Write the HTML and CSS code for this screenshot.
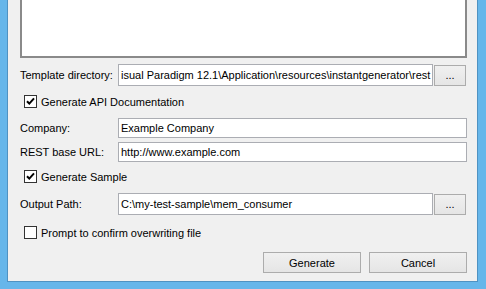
FILE: index.html
```html
<!DOCTYPE html>
<html>
<head>
<meta charset="utf-8">
<link rel="stylesheet" href="styles.css">
</head>
<body>
<div class="dialog">
  <div class="textarea"></div>

  <div class="row row-template">
    <div class="label">Template directory:</div>
    <div class="field field-short">isual Paradigm 12.1\Application\resources\instantgenerator\rest</div>
    <div class="browse">...</div>
  </div>

  <div class="check-row row-api">
    <span class="box"><svg width="11" height="11" viewBox="0 0 11 11"><path d="M2 5.2 L4.3 7.6 L9 2.4" fill="none" stroke="#000" stroke-width="2"/></svg></span>
    <span class="check-label">Generate API Documentation</span>
  </div>

  <div class="row row-company">
    <div class="label">Company:</div>
    <div class="field field-wide">Example Company</div>
  </div>

  <div class="row row-rest">
    <div class="label">REST base URL:</div>
    <div class="field field-wide">http://www.example.com</div>
  </div>

  <div class="check-row row-sample">
    <span class="box"><svg width="11" height="11" viewBox="0 0 11 11"><path d="M2 5.2 L4.3 7.6 L9 2.4" fill="none" stroke="#000" stroke-width="2"/></svg></span>
    <span class="check-label">Generate Sample</span>
  </div>

  <div class="row row-output">
    <div class="label">Output Path:</div>
    <div class="field field-short">C:\my-test-sample\mem_consumer</div>
    <div class="browse">...</div>
  </div>

  <div class="check-row row-prompt">
    <span class="box"></span>
    <span class="check-label">Prompt to confirm overwriting file</span>
  </div>

  <div class="actions">
    <div class="btn">Generate</div>
    <div class="btn">Cancel</div>
  </div>
</div>
</body>
</html>
```

FILE: styles.css
```css
html, body {
  margin: 0;
  padding: 0;
}
body {
  background: #66b6ea;
  width: 486px;
  height: 289px;
  overflow: hidden;
  font-family: "Liberation Sans", Arial, sans-serif;
  font-size: 11px;
  color: #000;
}
.dialog {
  margin-left: 7px;
  width: 447px;
  height: 281px;
  padding: 0 10px 0 12px;
  background: #f0f0f0;
  border: 1px solid #4f92c2;
  border-top: none;
  display: flex;
  flex-direction: column;
}
.textarea {
  height: 56px;
  background: #fff;
  border: 2px solid #8a8a8a;
  border-top: none;
  flex: none;
}
.row {
  display: flex;
  align-items: flex-start;
  flex: none;
}
.label {
  width: 98px;
  flex: none;
  align-self: center;
  white-space: nowrap;
}
.field {
  box-sizing: border-box;
  background: #fff;
  border: 1px solid #abadb3;
  padding: 0 2px;
  white-space: nowrap;
  overflow: hidden;
  display: flex;
  align-items: center;
}
.field-short {
  width: 315px;
  height: 22px;
}
.field-wide {
  flex: 1;
  height: 20px;
}
.browse {
  box-sizing: border-box;
  width: 32px;
  height: 21px;
  margin-left: 1px;
  margin-top: 1px;
  border: 1px solid #acacac;
  background: linear-gradient(#f0f0f0, #e5e5e5);
  display: flex;
  align-items: center;
  justify-content: center;
  padding-bottom: 2px;
}
.row-template { margin-top: 6px; }
.row-company { margin-top: 10px; }
.row-rest { margin-top: 4px; }
.row-output { margin-top: 10px; }

.check-row {
  display: flex;
  align-items: center;
  height: 13px;
  padding-left: 4px;
  flex: none;
}
.row-api { margin-top: 9px; }
.row-sample { margin-top: 8px; }
.row-prompt { margin-top: 11px; }
.box {
  box-sizing: border-box;
  width: 13px;
  height: 13px;
  border: 1px solid #333;
  background: #fff;
  display: flex;
  align-items: center;
  justify-content: center;
  flex: none;
}
.check-label {
  margin-left: 4px;
  white-space: nowrap;
}
.actions {
  display: flex;
  justify-content: flex-end;
  gap: 8px;
  margin-top: 13px;
  flex: none;
}
.btn {
  box-sizing: border-box;
  width: 98px;
  height: 21px;
  border: 1px solid #acacac;
  background: linear-gradient(#f0f0f0, #e5e5e5);
  display: flex;
  align-items: center;
  justify-content: center;
}
```
